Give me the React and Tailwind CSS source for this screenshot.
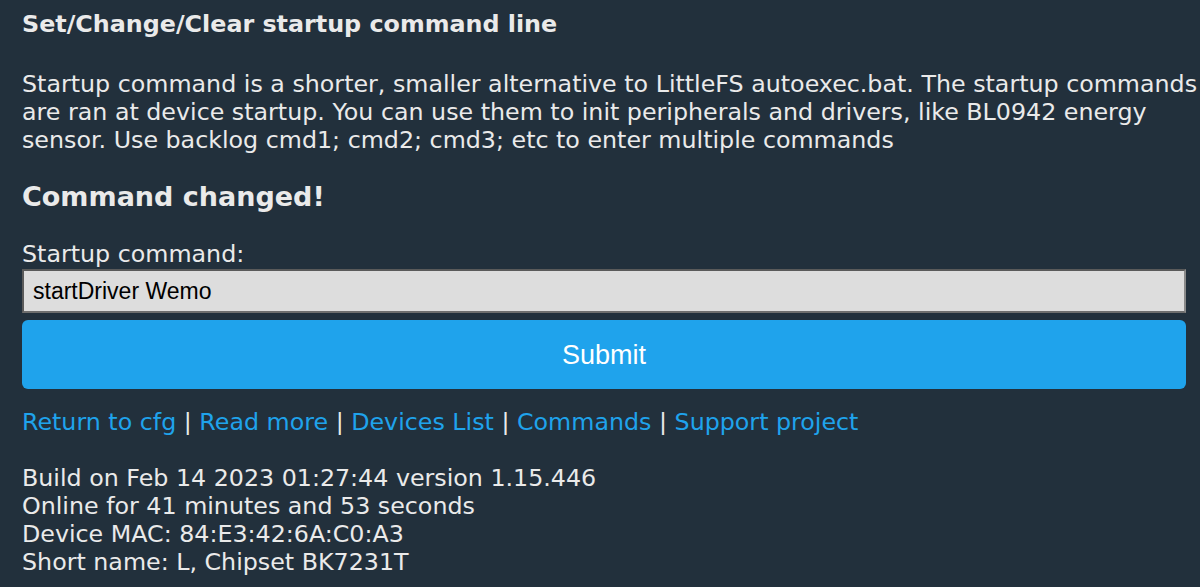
const links = ["Return to cfg", "Read more", "Devices List", "Commands", "Support project"];

const info = [
  "Build on Feb 14 2023 01:27:44 version 1.15.446",
  "Online for 41 minutes and 53 seconds",
  "Device MAC: 84:E3:42:6A:C0:A3",
  "Short name: L, Chipset BK7231T",
];

export default function App() {
  return (
    <div className="min-h-[587px] bg-[#22303c] pl-[22px] pr-[14px] text-[#eaeaea] font-['DejaVu_Sans',Verdana,sans-serif] text-[23.75px] leading-[28px]">
      <h3 className="pt-[10px] font-bold text-[23.8px] leading-[28px]">Set/Change/Clear startup command line</h3>

      <p className="mr-[-14px] mt-[32px]">
        Startup command is a shorter, smaller alternative to LittleFS autoexec.bat. The startup commands are ran at
        device startup. You can use them to init peripherals and drivers, like BL0942 energy sensor. Use backlog cmd1;
        cmd2; cmd3; etc to enter multiple commands
      </p>

      <h2 className="mt-[27px] font-bold text-[27px] leading-[32px]">Command changed!</h2>

      <form className="mt-[27px]" onSubmit={(e) => e.preventDefault()}>
        <label htmlFor="startup" className="block">
          Startup command:
        </label>
        <input
          id="startup"
          defaultValue="startDriver Wemo"
          className="mt-[1px] block h-[44px] w-full border-2 border-t-[#5a5a5a] border-l-[#5a5a5a] border-r-[#8a8a8a] border-b-[#6e6e6e] bg-[#dddddd] px-[9px] font-['Liberation_Sans',Arial,sans-serif] text-[23px] text-black outline-none"
        />
        <button
          type="submit"
          className="mt-[7px] block h-[69px] w-full rounded-[6px] bg-[#1fa3ec] font-['Liberation_Sans',Arial,sans-serif] text-[27px] text-white"
        >
          Submit
        </button>
      </form>

      <div className="mt-[19px]">
        {links.map((link, i) => (
          <span key={link}>
            {i > 0 && <span> | </span>}
            <a href="#" className="text-[#1fa3ec]">
              {link}
            </a>
          </span>
        ))}
      </div>

      <div className="mt-[28px] pb-[10px]">
        {info.map((line) => (
          <div key={line}>{line}</div>
        ))}
      </div>
    </div>
  );
}
